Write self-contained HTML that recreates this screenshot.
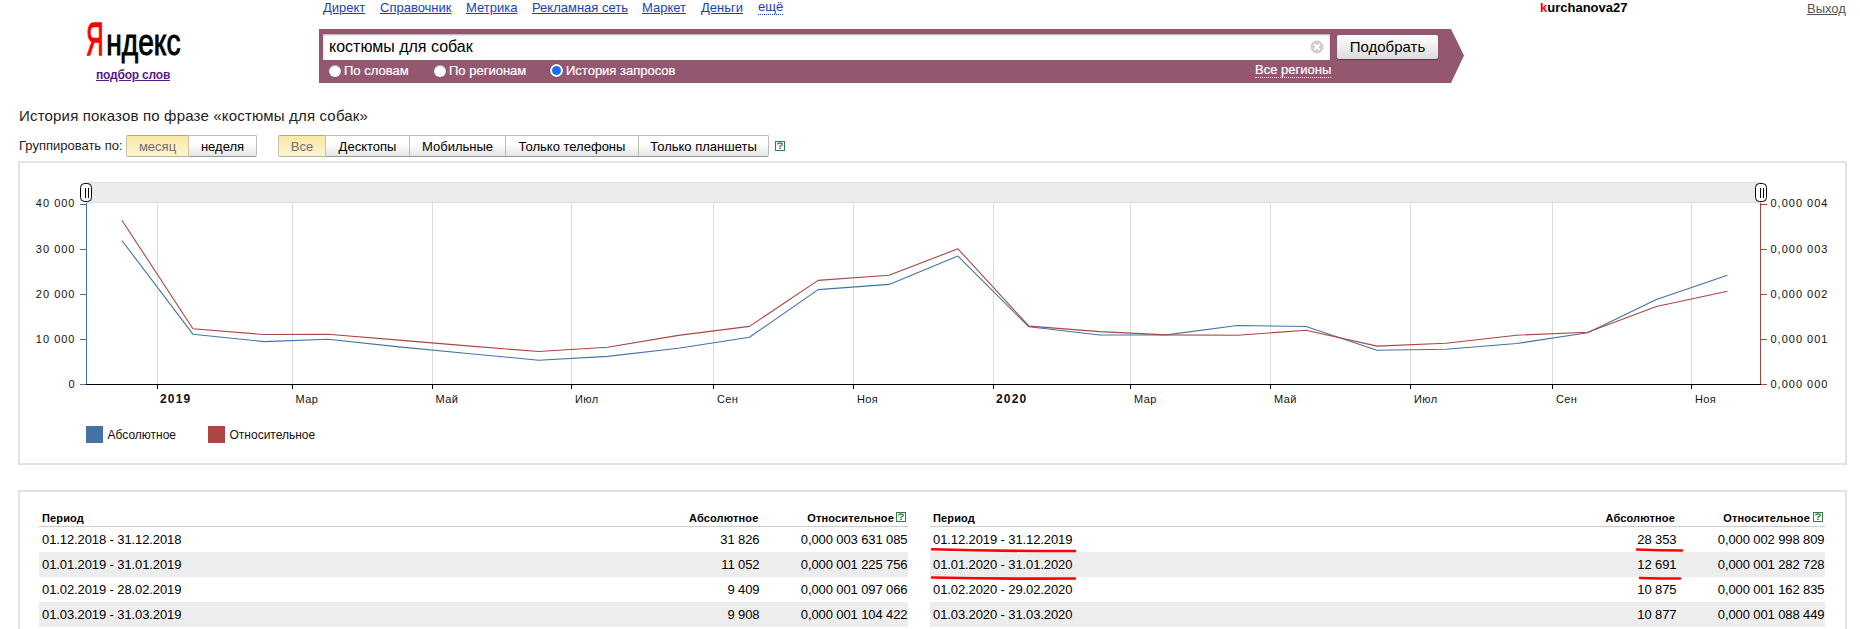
<!DOCTYPE html>
<html><head><meta charset="utf-8">
<style>
*{margin:0;padding:0;box-sizing:border-box}
html,body{width:1860px;height:629px;overflow:hidden;background:#fff;font-family:"Liberation Sans",sans-serif;color:#000}
.a{position:absolute;white-space:nowrap}
.nav{font-size:13px;line-height:15px;color:#1a3dc1;text-decoration:underline;top:0}
.rad{font-size:13px;line-height:15px;color:#fff;top:63px;-webkit-text-stroke:0.2px #fff}
.circ{position:absolute;width:12px;height:12px;border-radius:50%;background:#fff;top:64px;box-shadow:inset 0 1px 1px rgba(0,0,0,.35)}
.btn{position:absolute;top:135px;height:22px;font-size:13px;line-height:21px;text-align:center;border:1px solid #bdbdbd;border-bottom-color:#999;border-left:none;background:linear-gradient(#fff 40%,#e4e4e4);color:#000}
.btn.first{border-left:1px solid #bdbdbd;border-radius:2px 0 0 2px}
.btn.last{border-radius:0 2px 2px 0}
.btn.act{background:linear-gradient(#fbe8a6,#fdf4d0);color:#707070;border-color:#aba58e #c9c2a4 #b9b29a #c9c2a4}
.box{position:absolute;left:18px;width:1829px;border:2px solid #e2e2e2}
.help{position:absolute;width:11px;height:11px;border:1px solid #3d8b3d;font-size:9px;line-height:9px;font-weight:bold;color:#3d8b3d;text-align:center}
.th{font-size:11px;font-weight:bold;line-height:13px;top:512px;letter-spacing:0.15px}
.td{font-size:13px;line-height:25px;letter-spacing:-0.1px}
.row{position:absolute;height:25px}
.g{background:#ededed}
</style></head><body>

<!-- logo -->
<svg class="a" style="left:0;top:0" width="200" height="64" font-family="Liberation Sans">
<text transform="translate(86.3,55.3) scale(0.52,1.0)" font-size="46" fill="#f00" stroke="#f00" stroke-width="1.5">Я</text>
<text transform="translate(106.2,55.3) scale(0.67,0.9)" font-size="42" fill="#000" stroke="#000" stroke-width="1.1">ндекс</text>
</svg>
<div class="a" style="left:96px;top:68px;font-size:12px;line-height:14px;font-weight:bold;color:#551a8b;text-decoration:underline;letter-spacing:-0.2px">подбор слов</div>

<!-- nav -->
<div class="a nav" style="left:323px">Директ</div>
<div class="a nav" style="left:380px">Справочник</div>
<div class="a nav" style="left:466px">Метрика</div>
<div class="a nav" style="left:532px">Рекламная сеть</div>
<div class="a nav" style="left:642px">Маркет</div>
<div class="a nav" style="left:701px">Деньги</div>
<div class="a nav" style="left:758px;text-decoration:none;border-bottom:1px dotted #1a3dc1;line-height:14px">ещё</div>

<div class="a" style="left:1540px;top:0;font-size:13px;line-height:15px;font-weight:bold"><span style="color:#f00">k</span>urchanova27</div>
<div class="a" style="left:1807px;top:1px;font-size:13px;line-height:15px;color:#555;text-decoration:underline">Выход</div>

<!-- search bar -->

<div class="a" style="left:319px;top:29px;width:1132px;height:54px;background:#935870"></div>
<svg class="a" style="left:1450px;top:29px" width="15" height="54"><polygon points="0,0 1,0 14,26.5 1,54 0,54" fill="#935870"/></svg>
<div class="a" style="left:323px;top:34px;width:1007px;height:26px;background:#fff;box-shadow:inset 0 1px 2px rgba(0,0,0,.35)"></div>
<div class="a" style="left:329px;top:37px;font-size:16px;line-height:19px">костюмы для собак</div>
<svg class="a" style="left:1310px;top:40px" width="14" height="14"><circle cx="7" cy="7" r="6.5" fill="#cfcfcf"/><path d="M4.3 4.3L9.7 9.7M9.7 4.3L4.3 9.7" stroke="#fff" stroke-width="2"/></svg>
<div class="a" style="left:1337px;top:35px;width:101px;height:24px;border-radius:2px;background:linear-gradient(#fff,#dcdcdc);box-shadow:0 1px 1px rgba(0,0,0,.4);font-size:15px;line-height:23px;text-align:center">Подобрать</div>

<div class="circ" style="left:328.5px;top:64.5px"></div>
<div class="a rad" style="left:344px">По словам</div>
<div class="circ" style="left:433.5px;top:64.5px"></div>
<div class="a rad" style="left:449px">По регионам</div>
<div class="circ" style="left:550px;top:64px;width:13px;height:13px;border:2px solid #fff;background:#1a6cff;box-shadow:0 0 0 .5px rgba(0,0,0,.3)"></div>
<div class="a rad" style="left:566px">История запросов</div>
<div class="a rad" style="left:1255px;color:#fff;border-bottom:1px dotted #fff;line-height:14px;top:63px">Все регионы</div>

<!-- title -->
<div class="a" style="left:19px;top:107px;font-size:15px;line-height:17px;color:#222;letter-spacing:0.18px">История показов по фразе «костюмы для собак»</div>
<div class="a" style="left:19px;top:138px;font-size:13px;line-height:15px;color:#222">Группировать по:</div>
<div class="btn first act" style="left:126px;width:63px">месяц</div>
<div class="btn last" style="left:189px;width:68px">неделя</div>
<div class="btn first act" style="left:278px;width:48px">Все</div>
<div class="btn" style="left:326px;width:84px">Десктопы</div>
<div class="btn" style="left:410px;width:96px">Мобильные</div>
<div class="btn" style="left:506px;width:133px">Только телефоны</div>
<div class="btn last" style="left:639px;width:130px">Только планшеты</div>
<svg class="a" style="left:775px;top:141px" width="10" height="10"><rect x="0.5" y="0.5" width="9" height="9" fill="#fff" stroke="#2f8040"/><path d="M2.4 3.4Q2.7 2 5 2Q7.5 2 7.3 3.4Q7.1 4.3 5.1 5V5.9" stroke="#2f8040" stroke-width="1.3" fill="none"/><rect x="4.2" y="6.6" width="1.7" height="1.4" fill="#2f8040"/></svg>

<!-- chart box -->
<div class="box" style="top:161px;height:304px"></div>
<svg class="a" style="left:0;top:0" width="1860" height="480" viewBox="0 0 1860 480" font-family="Liberation Sans" shape-rendering="auto">
  <rect x="86" y="182" width="1675" height="21" fill="#ebebeb"/><path d="M86 182.5H1761M86 202.5H1761" stroke="#dedede" stroke-width="1"/>
  <g stroke="#dcdcdc" stroke-width="1">
    <path d="M157.5 203V384M292.5 203V384M432.5 203V384M571.5 203V384M713.5 203V384M853.5 203V384M993.5 203V384M1130.5 203V384M1270.5 203V384M1410.5 203V384M1552.5 203V384M1691.5 203V384"/>
  </g>
  <path d="M86.5 203V384" stroke="#4572a7" stroke-width="1"/>
  <path d="M80 204.5H86M80 249.5H86M80 294.5H86M80 339.5H86M80 384.5H86" stroke="#4572a7" stroke-width="1"/>
  <path d="M1760.5 203V384" stroke="#aa4643" stroke-width="1"/>
  <path d="M1761 204.5H1767M1761 249.5H1767M1761 294.5H1767M1761 339.5H1767M1761 384.5H1767" stroke="#aa4643" stroke-width="1"/>
  <path d="M86 384.5H1761" stroke="#000" stroke-width="1.2"/>
  <path d="M157.5 384V389M292.5 384V389M432.5 384V389M571.5 384V389M713.5 384V389M853.5 384V389M993.5 384V389M1130.5 384V389M1270.5 384V389M1410.5 384V389M1552.5 384V389M1691.5 384V389" stroke="#000" stroke-width="1"/>
  <polyline fill="none" stroke="#4572a7" stroke-width="1.1" stroke-linejoin="round" points="121.9,240.5 192.9,334.2 263.9,341.6 328.0,339.3 399.0,346.9 467.7,353.5 538.7,360.2 607.4,356.4 678.4,348.2 749.4,337.3 818.1,289.6 889.1,284.4 957.9,256.1 1028.9,326.8 1099.9,335.0 1166.3,334.9 1237.3,325.5 1306.0,326.5 1377.0,350.2 1445.7,349.3 1516.7,343.5 1587.7,332.8 1656.4,299.4 1727.4,275.2"/>
  <polyline fill="none" stroke="#aa4643" stroke-width="1.1" stroke-linejoin="round" points="121.9,220.2 192.9,328.7 263.9,334.5 328.0,334.2 399.0,340.1 467.7,345.9 538.7,351.5 607.4,347.2 678.4,335.4 749.4,326.4 818.1,280.4 889.1,275.2 957.9,248.8 1028.9,326.1 1099.9,331.6 1166.3,334.9 1237.3,335.3 1306.0,330.3 1377.0,346.1 1445.7,343.3 1516.7,335.2 1587.7,332.3 1656.4,306.5 1727.4,291.2"/>
  <!-- handles -->
  <g fill="#fff" stroke="#000" stroke-width="1">
    <rect x="80.5" y="183.5" width="11" height="18" rx="4"/>
    <rect x="1755.5" y="183.5" width="11" height="18" rx="4"/>
  </g>
  <path d="M85.5 188V198M88.5 188V198M1760.5 188V198M1763.5 188V198" stroke="#000" stroke-width="1"/>
  <!-- y labels -->
  <g font-size="11" fill="#111" text-anchor="end" letter-spacing="1">
    <text x="75.5" y="207">40 000</text>
    <text x="75.5" y="253">30 000</text>
    <text x="75.5" y="298">20 000</text>
    <text x="75.5" y="343">10 000</text>
    <text x="75.5" y="388">0</text>
  </g>
  <g font-size="11" fill="#111" letter-spacing="1">
    <text x="1770.5" y="207">0,000 004</text>
    <text x="1770.5" y="253">0,000 003</text>
    <text x="1770.5" y="298">0,000 002</text>
    <text x="1770.5" y="343">0,000 001</text>
    <text x="1770.5" y="388">0,000 000</text>
  </g>
  <g font-size="11" fill="#111" letter-spacing="0.4">
    <text x="160" y="403" font-weight="bold" font-size="12" letter-spacing="1.2">2019</text>
    <text x="295.5" y="403">Мар</text>
    <text x="435.5" y="403">Май</text>
    <text x="575" y="403">Июл</text>
    <text x="717" y="403">Сен</text>
    <text x="857" y="403">Ноя</text>
    <text x="996" y="403" font-weight="bold" font-size="12" letter-spacing="1.2">2020</text>
    <text x="1134" y="403">Мар</text>
    <text x="1274" y="403">Май</text>
    <text x="1414" y="403">Июл</text>
    <text x="1556" y="403">Сен</text>
    <text x="1695" y="403">Ноя</text>
  </g>
  <rect x="86" y="426" width="17" height="17" fill="#4572a7"/>
  <text x="107.5" y="439" font-size="12" fill="#111">Абсолютное</text>
  <rect x="208" y="426" width="17" height="17" fill="#aa4643"/>
  <text x="229.5" y="439" font-size="12" fill="#111">Относительное</text>
</svg>

<!-- table box -->
<div class="box" style="top:490px;height:160px"></div>
<!-- left table -->
<div class="a" style="left:39px;top:526px;width:869px;height:1px;background:#cdccd6"></div>
<div class="a th" style="left:42px">Период</div>
<div class="a th" style="left:689px;width:69px;text-align:right">Абсолютное</div>
<div class="a th" style="left:790px;width:104px;text-align:right">Относительное</div>
<svg class="a" style="left:896px;top:512px" width="10" height="10"><rect x="0.5" y="0.5" width="9" height="9" fill="#fff" stroke="#2f8040"/><path d="M2.4 3.4Q2.7 2 5 2Q7.5 2 7.3 3.4Q7.1 4.3 5.1 5V5.9" stroke="#2f8040" stroke-width="1.3" fill="none"/><rect x="4.2" y="6.6" width="1.7" height="1.4" fill="#2f8040"/></svg>
<div class="row g" style="left:39px;top:552px;width:869px"></div>
<div class="row g" style="left:39px;top:602px;width:869px"></div>
<!-- right table -->
<div class="a" style="left:930px;top:526px;width:895px;height:1px;background:#cdccd6"></div>
<div class="a th" style="left:933px">Период</div>
<div class="a th" style="left:1575px;width:100px;text-align:right">Абсолютное</div>
<div class="a th" style="left:1700px;width:110px;text-align:right">Относительное</div>
<svg class="a" style="left:1813px;top:512px" width="10" height="10"><rect x="0.5" y="0.5" width="9" height="9" fill="#fff" stroke="#2f8040"/><path d="M2.4 3.4Q2.7 2 5 2Q7.5 2 7.3 3.4Q7.1 4.3 5.1 5V5.9" stroke="#2f8040" stroke-width="1.3" fill="none"/><rect x="4.2" y="6.6" width="1.7" height="1.4" fill="#2f8040"/></svg>
<div class="row g" style="left:930px;top:552px;width:895px"></div>
<div class="row g" style="left:930px;top:602px;width:895px"></div>

<div class="a td" style="left:42px;top:527px">01.12.2018 - 31.12.2018</div>
<div class="a td" style="left:659.5px;top:527px;width:100px;text-align:right">31 826</div>
<div class="a td" style="left:757.5px;top:527px;width:150px;text-align:right">0,000 003 631 085</div>
<div class="a td" style="left:42px;top:552px">01.01.2019 - 31.01.2019</div>
<div class="a td" style="left:659.5px;top:552px;width:100px;text-align:right">11 052</div>
<div class="a td" style="left:757.5px;top:552px;width:150px;text-align:right">0,000 001 225 756</div>
<div class="a td" style="left:42px;top:577px">01.02.2019 - 28.02.2019</div>
<div class="a td" style="left:659.5px;top:577px;width:100px;text-align:right">9 409</div>
<div class="a td" style="left:757.5px;top:577px;width:150px;text-align:right">0,000 001 097 066</div>
<div class="a td" style="left:42px;top:602px">01.03.2019 - 31.03.2019</div>
<div class="a td" style="left:659.5px;top:602px;width:100px;text-align:right">9 908</div>
<div class="a td" style="left:757.5px;top:602px;width:150px;text-align:right">0,000 001 104 422</div>
<div class="a td" style="left:933px;top:527px">01.12.2019 - 31.12.2019</div>
<div class="a td" style="left:1576.5px;top:527px;width:100px;text-align:right">28 353</div>
<div class="a td" style="left:1674.5px;top:527px;width:150px;text-align:right">0,000 002 998 809</div>
<div class="a td" style="left:933px;top:552px">01.01.2020 - 31.01.2020</div>
<div class="a td" style="left:1576.5px;top:552px;width:100px;text-align:right">12 691</div>
<div class="a td" style="left:1674.5px;top:552px;width:150px;text-align:right">0,000 001 282 728</div>
<div class="a td" style="left:933px;top:577px">01.02.2020 - 29.02.2020</div>
<div class="a td" style="left:1576.5px;top:577px;width:100px;text-align:right">10 875</div>
<div class="a td" style="left:1674.5px;top:577px;width:150px;text-align:right">0,000 001 162 835</div>
<div class="a td" style="left:933px;top:602px">01.03.2020 - 31.03.2020</div>
<div class="a td" style="left:1576.5px;top:602px;width:100px;text-align:right">10 877</div>
<div class="a td" style="left:1674.5px;top:602px;width:150px;text-align:right">0,000 001 088 449</div>
<svg class="a" style="left:0;top:0" width="1860" height="629"><g fill="none" stroke="#f00" stroke-width="2.6" stroke-linecap="round"><path d="M932 549.2 Q1000 551.2 1075 551"/><path d="M932 577.5 Q1000 579 1075 578.5"/><path d="M1637 549.5 Q1660 550.5 1682 550.5"/><path d="M1640 578 Q1660 578.5 1680 578.5"/></g></svg>
</body></html>
